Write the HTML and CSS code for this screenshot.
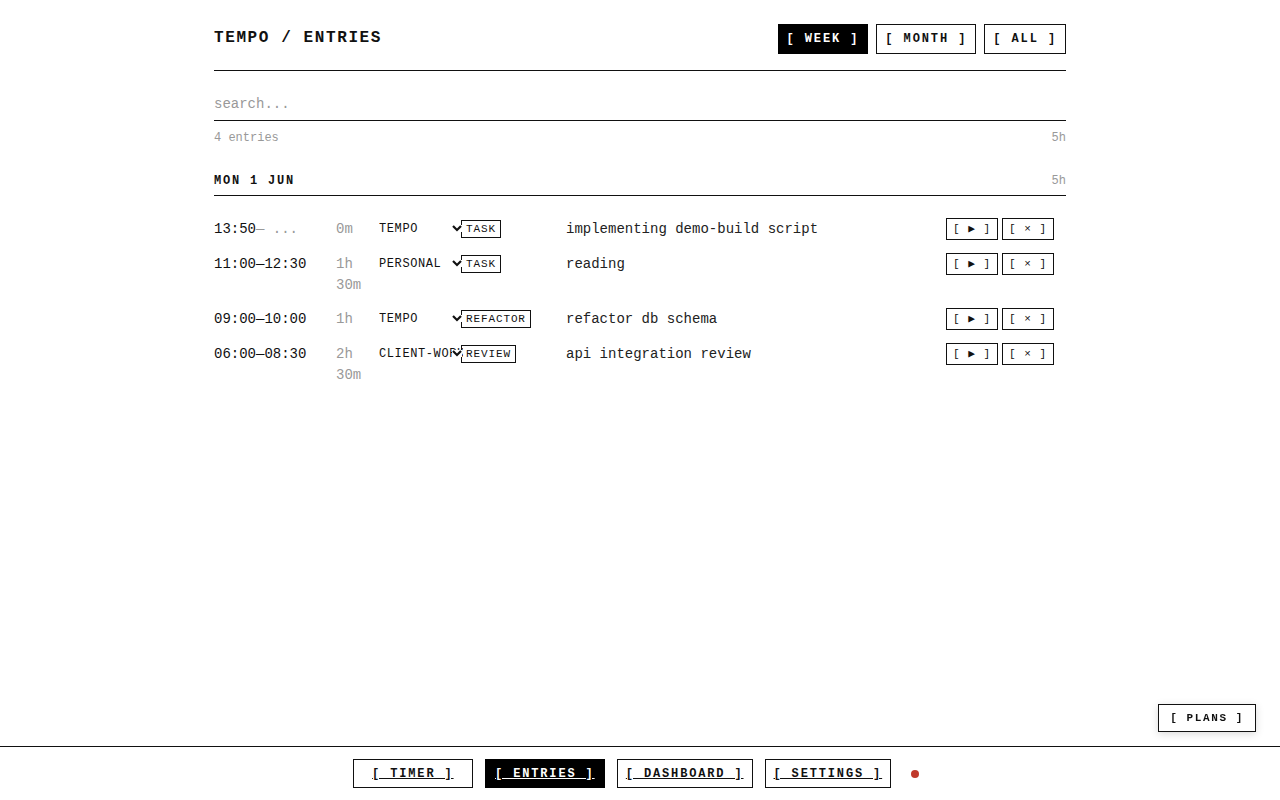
FILE: index.html
```html
<!DOCTYPE html>
<html lang="en">
<head>
  <meta charset="UTF-8" />
  <meta name="viewport" content="width=device-width, initial-scale=1.0" />
  <title>Tempo / Entries</title>
  <link rel="stylesheet" href="styles.css">
</head>
<body>
  <main class="page">
    <header class="page-head">
      <h1>TEMPO / ENTRIES</h1>
      <div class="range">
        <button class="range-btn active">[ WEEK ]</button>
        <button class="range-btn">[ MONTH ]</button>
        <button class="range-btn">[ ALL ]</button>
      </div>
    </header>

    <input type="text" class="search" placeholder="search..." />
    <div class="meta">
      <span>4 entries</span>
      <span>5h</span>
    </div>

    <section class="day">
      <div class="day-head">
        <span class="day-name">MON 1 JUN</span>
        <span class="day-total">5h</span>
      </div>

      <div class="rows">
        <div class="row">
          <div class="time">13:50<span class="dim">— ...</span></div>
          <div class="dur">0m</div>
          <label class="project">
            <select><option>TEMPO</option><option>PERSONAL</option><option>CLIENT-WORK</option></select>
            <svg class="chev" width="10" height="7" viewBox="0 0 10 7"><polyline points="1,1 5,5 9,1" fill="none" stroke="#111" stroke-width="2.2"/></svg>
          </label>
          <div><span class="tag">TASK</span></div>
          <div class="desc">implementing demo-build script</div>
          <div class="actions"><button class="act">[ ▶ ]</button><button class="act">[ × ]</button></div>
        </div>
        <div class="row">
          <div class="time">11:00—12:30</div>
          <div class="dur">1h 30m</div>
          <label class="project">
            <select><option>PERSONAL</option><option>TEMPO</option><option>CLIENT-WORK</option></select>
            <svg class="chev" width="10" height="7" viewBox="0 0 10 7"><polyline points="1,1 5,5 9,1" fill="none" stroke="#111" stroke-width="2.2"/></svg>
          </label>
          <div><span class="tag">TASK</span></div>
          <div class="desc">reading</div>
          <div class="actions"><button class="act">[ ▶ ]</button><button class="act">[ × ]</button></div>
        </div>
        <div class="row">
          <div class="time">09:00—10:00</div>
          <div class="dur">1h</div>
          <label class="project">
            <select><option>TEMPO</option><option>PERSONAL</option><option>CLIENT-WORK</option></select>
            <svg class="chev" width="10" height="7" viewBox="0 0 10 7"><polyline points="1,1 5,5 9,1" fill="none" stroke="#111" stroke-width="2.2"/></svg>
          </label>
          <div><span class="tag">REFACTOR</span></div>
          <div class="desc">refactor db schema</div>
          <div class="actions"><button class="act">[ ▶ ]</button><button class="act">[ × ]</button></div>
        </div>
        <div class="row">
          <div class="time">06:00—08:30</div>
          <div class="dur">2h 30m</div>
          <label class="project">
            <select><option>CLIENT-WORK</option><option>TEMPO</option><option>PERSONAL</option></select>
            <svg class="chev" width="10" height="7" viewBox="0 0 10 7"><polyline points="1,1 5,5 9,1" fill="none" stroke="#111" stroke-width="2.2"/></svg>
          </label>
          <div><span class="tag">REVIEW</span></div>
          <div class="desc">api integration review</div>
          <div class="actions"><button class="act">[ ▶ ]</button><button class="act">[ × ]</button></div>
        </div>
      </div>
    </section>
  </main>

  <button class="plans">[ PLANS ]</button>

  <nav class="bottom-nav">
    <a href="#" class="nav-link">[ TIMER ]</a>
    <a href="#" class="nav-link active">[ ENTRIES ]</a>
    <a href="#" class="nav-link">[ DASHBOARD ]</a>
    <a href="#" class="nav-link">[ SETTINGS ]</a>
    <span class="status"><span class="dot"></span></span>
  </nav>
</body>
</html>
```

FILE: styles.css
```css
body {
  margin: 0;
  background: #fff;
  color: #111;
  font-family: 'Liberation Mono', 'DejaVu Sans Mono', monospace;
}
button, input, select {
  font-family: inherit;
  color: inherit;
}
.page {
  max-width: 852px;
  margin: 0 auto;
  padding-top: 24px;
}
.page-head {
  display: flex;
  justify-content: space-between;
  align-items: center;
  padding-bottom: 16px;
  border-bottom: 1px solid #111;
}
h1 {
  margin: 0 0 2px;
  font-size: 16px;
  font-weight: bold;
  letter-spacing: 0.1em;
}
.range {
  display: flex;
  gap: 8px;
}
.range-btn {
  background: #fff;
  border: 1px solid #111;
  padding: 7px 8px;
  font-size: 12px;
  line-height: 14px;
  font-weight: bold;
  letter-spacing: 1.9px;
  cursor: pointer;
}
.range-btn.active {
  background: #000;
  color: #fff;
  border-color: #000;
}
.search {
  display: block;
  box-sizing: border-box;
  width: 100%;
  margin-top: 16px;
  padding: 9px 0 7px;
  border: none;
  border-bottom: 1px solid #111;
  font-size: 14px;
  line-height: 17px;
  outline: none;
}
.search::placeholder {
  color: #999;
}
.meta {
  display: flex;
  justify-content: space-between;
  margin-top: 8px;
  font-size: 12px;
  line-height: 18px;
  color: #999;
}
.day-head {
  display: flex;
  justify-content: space-between;
  align-items: center;
  margin-top: 25px;
  padding-bottom: 5px;
  border-bottom: 1px solid #111;
  font-size: 12px;
  line-height: 18px;
}
.day-name {
  font-weight: bold;
  letter-spacing: 0.15em;
}
.day-total {
  color: #999;
}
.rows {
  display: flex;
  flex-direction: column;
  gap: 13px;
  margin-top: 22px;
}
.row {
  display: grid;
  grid-template-columns: 122px 43px 82px 105px 1fr auto;
  align-items: start;
  padding-right: 12px;
  font-size: 14px;
  line-height: 21px;
}
.time, .dur, .desc {
  padding-top: 1px;
}
.time {
  color: #111;
}
.dim, .dur {
  color: #999;
}
.dur {
  margin-bottom: -1px;
}
.project {
  position: relative;
  display: block;
  width: 84px;
  height: 22px;
}
.project select {
  appearance: none;
  -webkit-appearance: none;
  width: 84px;
  height: 22px;
  padding: 0;
  border: none;
  background: transparent;
  font-size: 12px;
  letter-spacing: 0.05em;
  text-transform: uppercase;
  cursor: pointer;
}
.chev {
  position: absolute;
  left: 73px;
  top: 7px;
  background: #fff;
  pointer-events: none;
}
.tag {
  display: inline-block;
  margin-top: 2px;
  padding: 0 4px;
  border: 1px solid #111;
  font-size: 11px;
  line-height: 16px;
  letter-spacing: 0.08em;
}
.desc {
  color: #222;
}
.actions {
  display: flex;
  gap: 4px;
}
.act {
  background: #fff;
  border: 1px solid #111;
  padding: 2px 6px;
  font-size: 11px;
  line-height: 16px;
  letter-spacing: 1px;
  cursor: pointer;
}
.plans {
  position: fixed;
  right: 24px;
  bottom: 68px;
  background: #fff;
  border: 1px solid #111;
  padding: 6px 11px;
  font-size: 11px;
  line-height: 14px;
  font-weight: bold;
  letter-spacing: 1.6px;
  box-shadow: 0 2px 8px rgba(0,0,0,0.15);
  cursor: pointer;
}
.bottom-nav {
  position: fixed;
  left: 0;
  right: 0;
  bottom: 0;
  display: flex;
  justify-content: center;
  align-items: center;
  gap: 12px;
  padding: 12px 0;
  background: #fff;
  border-top: 1px solid #111;
}
.nav-link {
  min-width: 120px;
  box-sizing: border-box;
  text-align: center;
  padding: 6px 8px 4px;
  border: 1px solid #111;
  color: #111;
  font-size: 12px;
  line-height: 17px;
  font-weight: bold;
  letter-spacing: 1.85px;
}
.nav-link.active {
  background: #000;
  color: #fff;
  border-color: #000;
}
.status {
  width: 24px;
  display: flex;
  justify-content: center;
}
.dot {
  width: 8px;
  height: 8px;
  border-radius: 50%;
  background: #c0392b;
}
```
